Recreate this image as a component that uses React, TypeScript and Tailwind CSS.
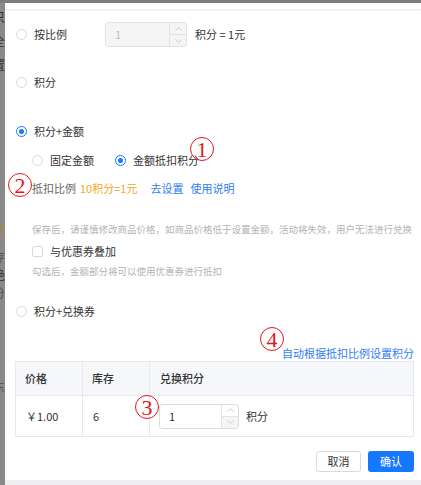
import React from "react";

// Points-exchange settings dialog, shown over a dimmed page.

const FONT = { fontFamily: '"Noto Sans CJK SC", "Noto Sans", sans-serif' };
const MARK = { fontFamily: '"Liberation Serif", "DejaVu Serif", serif' };

function Radio({ checked = false, label }: { checked?: boolean; label: string }) {
  return (
    <div className="flex items-center gap-[7px]">
      <span
        className={`flex size-[11px] items-center justify-center rounded-full border bg-white ${
          checked ? "border-[#1677ff]" : "border-[#d9d9d9]"
        }`}
      >
        {checked && <span className="size-[5px] rounded-full bg-[#1677ff]" />}
      </span>
      <span className="text-[11px] leading-none text-[#333]">{label}</span>
    </div>
  );
}

function Stepper({ disabled = false, width }: { disabled?: boolean; width: string }) {
  return (
    <div
      className={`flex h-[25px] ${width} rounded-[3px] border ${
        disabled ? "border-[#e3e3e3] bg-[#f5f5f5]" : "border-[#dcdcdc] bg-white"
      }`}
    >
      <div
        className={`flex flex-1 items-center pl-[9px] text-[11px] ${
          disabled ? "text-[#c0c0c0]" : "text-[#333]"
        }`}
      >
        1
      </div>
      <div className="flex w-[17px] flex-col border-l border-[#e3e3e3]">
        <div className="flex flex-1 items-center justify-center">
          <svg width="7" height="4" viewBox="0 0 7 4" fill="none" stroke="#c4c4c4" strokeWidth="0.9">
            <path d="M0.5 3.5 L3.5 0.6 L6.5 3.5" />
          </svg>
        </div>
        <div
          className={`flex flex-1 items-center justify-center border-t border-[#e3e3e3] ${
            disabled ? "" : "bg-[#f5f5f5]"
          }`}
        >
          <svg width="7" height="4" viewBox="0 0 7 4" fill="none" stroke="#c4c4c4" strokeWidth="0.9">
            <path d="M0.5 0.5 L3.5 3.4 L6.5 0.5" />
          </svg>
        </div>
      </div>
    </div>
  );
}

// red annotation: circled digit
function Mark({ n, className }: { n: string; className: string }) {
  return (
    <span
      style={MARK}
      className={`absolute flex size-[24px] items-center justify-center rounded-full border-[1.5px] border-[#e8141a] pt-[1px] text-[22px] leading-none text-[#e8141a] ${className}`}
    >
      {n}
    </span>
  );
}

export default function App() {
  return (
    <div style={FONT} className="relative flex h-[485px] w-[421px] flex-col overflow-hidden bg-[#8a8a8a]">
      <div className="h-[3px] bg-[#7d7d7d]" />
      <div className="flex flex-1">
        {/* page behind the overlay */}
        <div className="flex w-[5px] flex-col overflow-hidden text-[12px] leading-none text-[#333]">
          <span className="-ml-[7px] mt-[8px]">只</span>
          <span className="-ml-[7px] mt-[12px]">全</span>
          <span className="-ml-[7px] mt-[12px]">置</span>
          <span className="-ml-[7px] mt-[152px] text-[#b08a3a]">分</span>
          <span className="-ml-[7px] mt-[16px] text-[#555]">存</span>
          <span className="-ml-[7px] mt-[6px]">绝</span>
          <span className="-ml-[7px] mt-[6px] text-[#555]">分</span>
          <span className="-ml-[7px] mt-[82px] text-[#555]">东</span>
        </div>

        {/* dialog */}
        <div className="relative flex flex-1 flex-col bg-white">
          <div className="h-[7px] border-b border-[#ececec] shadow-[0_1px_2px_rgba(0,0,0,0.04)]" />

          <div className="flex flex-1 flex-col pl-[11px]">
            <div className="mt-[12px] flex h-[25px] items-center">
              <div className="w-[89px]">
                <Radio label="按比例" />
              </div>
              <Stepper disabled width="w-[82px]" />
              <span className="ml-[8px] text-[11px] text-[#333]">积分 = 1元</span>
            </div>

            <div className="mt-[25px] flex h-[20px] items-center">
              <Radio label="积分" />
            </div>

            <div className="mt-[29px] flex h-[20px] items-center">
              <Radio checked label="积分+金额" />
            </div>

            <div className="mt-[9px] flex h-[20px] items-center gap-[21px] pl-[16px]">
              <Radio label="固定金额" />
              <Radio checked label="金额抵扣积分" />
            </div>

            <div className="mt-[8px] flex h-[20px] items-center pl-[16px] text-[11px]">
              <span className="text-[#666]">抵扣比例</span>
              <span className="ml-[4px] text-[#f5a623]">10积分=1元</span>
              <span className="ml-[13px] text-[#2f7cf6]">去设置</span>
              <span className="ml-[7px] text-[#2f7cf6]">使用说明</span>
            </div>

            <div className="mt-[23px] flex h-[16px] items-center whitespace-nowrap pl-[16px] text-[9.5px] text-[#b3b3b3]">
              保存后，请谨慎修改商品价格，如商品价格低于设置金额，活动将失效，用户无法进行兑换
            </div>

            <div className="mt-[6px] flex h-[16px] items-center gap-[7px] pl-[16px]">
              <span className="size-[11px] rounded-[2px] border border-[#d9d9d9] bg-white" />
              <span className="text-[11px] text-[#333]">与优惠券叠加</span>
            </div>

            <div className="mt-[4px] flex h-[16px] items-center pl-[16px] text-[9.5px] text-[#b3b3b3]">
              勾选后，金额部分将可以使用优惠券进行抵扣
            </div>

            <div className="mt-[22px] flex h-[20px] items-center">
              <Radio label="积分+兑换券" />
            </div>

            <div className="mt-[24px] flex h-[16px] items-center justify-end pr-[7px] text-[11px] text-[#2f7cf6]">
              自动根据抵扣比例设置积分
            </div>

            {/* goods table */}
            <div className="-ml-[1px] mr-[7px] border border-[#e8e8e8] text-[11px]">
              <div className="flex h-[33px] items-center bg-[#f5f7fa] font-medium text-[#333]">
                <div className="flex h-full w-[67px] items-center border-r border-[#e8e8e8] pl-[9px]">价格</div>
                <div className="flex h-full w-[67px] items-center border-r border-[#e8e8e8] pl-[9px]">库存</div>
                <div className="flex h-full flex-1 items-center pl-[10px]">兑换积分</div>
              </div>
              <div className="flex h-[41px] items-center border-t border-[#e8e8e8] text-[#333]">
                <div className="flex h-full w-[67px] items-center border-r border-[#e8e8e8] pl-[10px]">￥1.00</div>
                <div className="flex h-full w-[67px] items-center border-r border-[#e8e8e8] pl-[10px]">6</div>
                <div className="flex h-full flex-1 items-center pl-[9px]">
                  <Stepper width="w-[80px]" />
                  <span className="ml-[7px]">积分</span>
                </div>
              </div>
            </div>

            <div className="mt-[14px] flex justify-end gap-[7px] pr-[7px]">
              <button className="h-[21px] w-[45px] rounded-[3px] border border-[#d9d9d9] bg-white text-[11px] text-[#333]">
                取消
              </button>
              <button className="h-[21px] w-[46px] rounded-[3px] bg-[#1677ff] text-[11px] text-white">
                确认
              </button>
            </div>
          </div>

          <div className="h-[5px] bg-[#efeff1]" />

          <Mark n="1" className="left-[185px] top-[134px]" />
          <Mark n="2" className="left-[3px] top-[170px]" />
          <Mark n="3" className="left-[130px] top-[392px]" />
          <Mark n="4" className="left-[255px] top-[324px]" />
        </div>
      </div>
    </div>
  );
}
